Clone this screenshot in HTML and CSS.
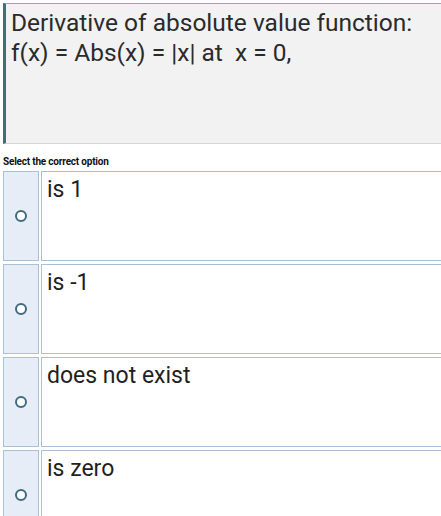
FILE: index.html
```html
<!DOCTYPE html>
<html lang="en">
<head>
    <meta charset="UTF-8">
    <meta name="viewport" content="width=device-width, initial-scale=1.0">
    <title>Question</title>
    <link rel="stylesheet" href="styles.css">
</head>
<body>

    <div class="question">
        <p>Derivative of absolute value function:</p>
        <p>f(x) = Abs(x) = |x| at &nbsp;x = 0,</p>
    </div>

    <p class="prompt">Select the correct option</p>

    <div class="options">
        <div class="option">
            <div class="radioCell"><span class="radio"></span></div>
            <div class="answer">is 1</div>
        </div>
        <div class="option">
            <div class="radioCell"><span class="radio"></span></div>
            <div class="answer">is -1</div>
        </div>
        <div class="option">
            <div class="radioCell"><span class="radio"></span></div>
            <div class="answer">does not exist</div>
        </div>
        <div class="option">
            <div class="radioCell"><span class="radio"></span></div>
            <div class="answer">is zero</div>
        </div>
    </div>

</body>
</html>
```

FILE: styles.css
```css
* {
    margin: 0;
    padding: 0;
    box-sizing: border-box;
}

body {
    font-family: 'Roboto', 'Noto Sans', sans-serif;
    background: #fff;
    color: #222;
    padding: 3px 0 0 3px;
    overflow: hidden;
    height: 516px;
}

.question {
    height: 141px;
    background-color: #f2f2f2;
    border-top: 1px solid #8fa9b5;
    border-left: 3px solid #3f6f82;
    border-bottom: 1px solid #d6d6d6;
    padding: 4px 0 0 5px;
    font-size: 24.5px;
    line-height: 30px;
    color: #2b2b2b;
}

.prompt {
    font-size: 10px;
    font-weight: bold;
    line-height: 14px;
    letter-spacing: -0.2px;
    margin-top: 11px;
    color: #111;
}

.options {
    display: flex;
    flex-direction: column;
    gap: 3px;
    margin-top: 2px;
}

.option {
    display: flex;
    gap: 2px;
    height: 90px;
}

.radioCell {
    width: 36px;
    background-color: #e6edf6;
    border: 1px solid #a8c1d8;
    display: flex;
    justify-content: center;
    align-items: center;
}

.radio {
    width: 12px;
    height: 12px;
    border: 2.5px solid #3e6b7d;
    border-radius: 50%;
    background-color: #fff;
}

.answer {
    flex: 1;
    border: 1px solid #a8c1d8;
    border-right: none;
    padding: 3px 0 0 5px;
    font-size: 23px;
    line-height: 30px;
    color: #1f1f1f;
}
```
